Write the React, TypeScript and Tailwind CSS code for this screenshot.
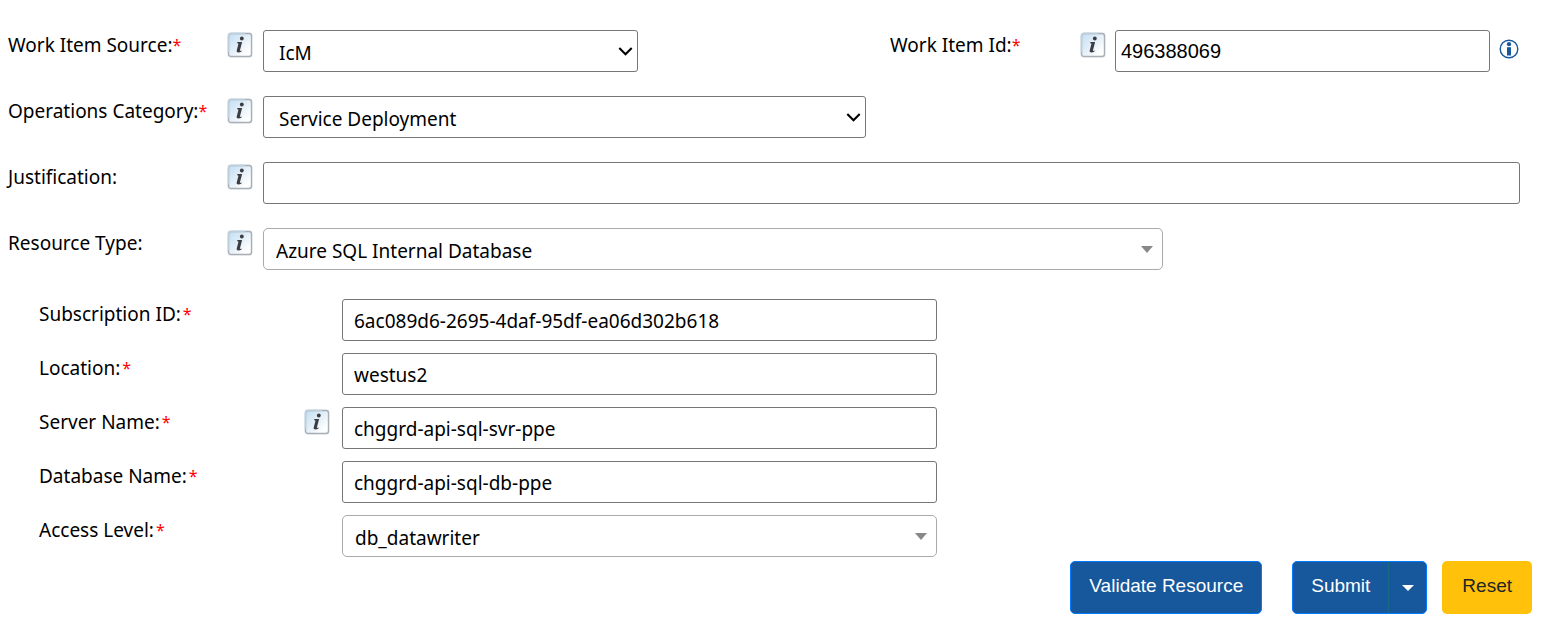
import React, { useId } from "react";

const LABEL_FONT = "font-['Segoe_UI','Noto_Sans','Open_Sans',sans-serif]";
const BUTTON_FONT = "font-['Liberation_Sans',Arial,sans-serif]";

function Star() {
  return <span className="align-top text-[16px] text-[#ff0000]">*</span>;
}

function HelpBadge() {
  const id = useId();
  return (
    <svg className="mt-[2px] size-[26px] shrink-0" viewBox="0 0 26 26" aria-hidden="true">
      <defs>
        <linearGradient id={id} x1="0" y1="0" x2="1" y2="1">
          <stop offset="0" stopColor="#c3def2" />
          <stop offset="0.45" stopColor="#e2eef8" />
          <stop offset="0.8" stopColor="#fdfefe" />
        </linearGradient>
      </defs>
      <rect x="0" y="0" width="26" height="26" rx="3" fill="#f3f8fc" />
      <rect x="1.5" y="1.5" width="23" height="23" rx="2.5" fill={`url(#${id})`} stroke="#a9afb5" strokeWidth="1.4" />
      <path d="M1.5 20V4a2.5 2.5 0 0 1 2.5-2.5h14" fill="none" stroke="#bccfdc" strokeWidth="1.4" />
      <circle cx="14.8" cy="6.5" r="1.9" fill="#3a3e44" />
      <path d="M10.4 10.1h4.7l-2.2 8.3c-.2.7.3.8 1.8.1l-.4 1.2c-2 1-5.2 1.4-4.6-1.2l1.7-6.4c.2-.7-.4-.8-1.3-.8z" fill="#3a3e44" />
    </svg>
  );
}

function InfoCircle() {
  return (
    <svg className="size-5" viewBox="0 0 20 20" aria-hidden="true">
      <circle cx="10" cy="10" r="8.8" fill="none" stroke="#17579b" strokeWidth="1.4" />
      <circle cx="10" cy="5.2" r="2.1" fill="#17579b" />
      <path d="M8 8.2h4v8.3H8z" fill="#17579b" />
    </svg>
  );
}

type SelectProps = { id: string; value: string; kind: "native" | "combo" };

function SelectBox({ id, value, kind }: SelectProps) {
  const native = kind === "native";
  return (
    <div className="relative w-full">
      <select
        id={id}
        defaultValue={value}
        className={
          native
            ? "block h-[42px] w-full appearance-none rounded-[3px] border border-[#767676] bg-white pt-1 pr-8 pl-[15px] text-[19px] text-black"
            : "block h-[42px] w-full appearance-none rounded-[5px] border border-[#aaaaaa] bg-white pt-1 pr-8 pl-3 text-[19px] text-black"
        }
      >
        <option>{value}</option>
      </select>
      {native ? (
        <svg className="pointer-events-none absolute top-[17px] right-[5px] h-[9px] w-[15px]" viewBox="0 0 15 9" aria-hidden="true">
          <path d="M1.3 1.1 7.5 7.2 13.7 1.1" fill="none" stroke="#000" strokeWidth="2.1" />
        </svg>
      ) : (
        <svg className="pointer-events-none absolute top-[18px] right-[10px] h-[7px] w-3" viewBox="0 0 12 7" aria-hidden="true">
          <path d="M0 0h12L6 7z" fill="#888" />
        </svg>
      )}
    </div>
  );
}

type RowProps = { id: string; label: string; required?: boolean; children: React.ReactNode };

function MainRow({ id, label, required, children }: RowProps) {
  return (
    <div className="flex items-start">
      <label htmlFor={id} className="w-[219px] shrink-0 leading-[30px] whitespace-nowrap">
        {label}
        {required && <Star />}
      </label>
      <div className="w-9 shrink-0">
        <HelpBadge />
      </div>
      <div className="min-w-0 flex-1">{children}</div>
    </div>
  );
}

function ResourceRow({ id, label, help, children }: { id: string; label: string; help?: boolean; children: React.ReactNode }) {
  return (
    <div className="flex items-start">
      <label htmlFor={id} className="flex w-[265px] shrink-0 gap-[2px] leading-[30px] whitespace-nowrap">
        <span>{label}</span>
        <Star />
      </label>
      <div className="w-[38px] shrink-0">{help && <HelpBadge />}</div>
      <div className="min-w-0 flex-1">
        <div className="w-[50.5%]">{children}</div>
      </div>
    </div>
  );
}

function ResourceInput({ id, value }: { id: string; value: string }) {
  return (
    <input
      id={id}
      type="text"
      defaultValue={value}
      className="block h-[42px] w-full rounded-[3px] border border-[#767676] bg-white px-[11px] pt-[2px] text-[19px] text-black"
    />
  );
}

export default function App() {
  return (
    <form className={`bg-white pt-[30px] pb-5 text-[19px] text-black ${LABEL_FONT}`} onSubmit={(e) => e.preventDefault()}>
      <div className="flex flex-col gap-6 pr-8 pl-2">
        <div className="flex items-start">
          <div className="min-w-0 flex-1">
            <MainRow id="source" label="Work Item Source:" required>
              <SelectBox id="source" value="IcM" kind="native" />
            </MainRow>
          </div>
          <div className="box-content flex min-w-0 flex-1 items-start pl-[252px]">
            <label htmlFor="item-id" className="w-[190px] shrink-0 leading-[30px] whitespace-nowrap">
              Work Item Id:
              <Star />
            </label>
            <div className="w-[35px] shrink-0">
              <HelpBadge />
            </div>
            <input
              id="item-id"
              type="text"
              defaultValue="496388069"
              className="h-[42px] min-w-0 flex-1 rounded-[3px] border border-[#767676] bg-white px-[5px] font-['Liberation_Sans',Arial,sans-serif] text-[20px] text-black"
            />
            <button type="button" aria-label="Work item details" className="mt-[9px] ml-[9px] w-[21px] shrink-0">
              <InfoCircle />
            </button>
          </div>
        </div>

        <MainRow id="category" label="Operations Category:" required>
          <div className="w-[48%]">
            <SelectBox id="category" value="Service Deployment" kind="native" />
          </div>
        </MainRow>

        <MainRow id="justification" label="Justification:">
          <input
            id="justification"
            type="text"
            className="block h-[42px] w-full rounded-[3px] border border-[#767676] bg-white px-[5px]"
          />
        </MainRow>

        <MainRow id="resource-type" label="Resource Type:">
          <div className="w-[71.6%]">
            <SelectBox id="resource-type" value="Azure SQL Internal Database" kind="combo" />
          </div>
        </MainRow>
      </div>

      <div className="mt-[29px] flex flex-col gap-3 pr-8 pl-[39px]">
        <ResourceRow id="subscription" label="Subscription ID:">
          <ResourceInput id="subscription" value="6ac089d6-2695-4daf-95df-ea06d302b618" />
        </ResourceRow>
        <ResourceRow id="location" label="Location:">
          <ResourceInput id="location" value="westus2" />
        </ResourceRow>
        <ResourceRow id="server" label="Server Name:" help>
          <ResourceInput id="server" value="chggrd-api-sql-svr-ppe" />
        </ResourceRow>
        <ResourceRow id="database" label="Database Name:">
          <ResourceInput id="database" value="chggrd-api-sql-db-ppe" />
        </ResourceRow>
        <ResourceRow id="access" label="Access Level:">
          <SelectBox id="access" value="db_datawriter" kind="combo" />
        </ResourceRow>
      </div>

      <div className={`mt-1 flex justify-end pr-5 text-[19px] ${BUTTON_FONT}`}>
        <button type="button" className="h-[53px] rounded-[5px] border border-[#007bff] bg-[#17579b] px-[18px] pb-[2px] text-white">
          Validate Resource
        </button>
        <div className="ml-[30px] flex h-[53px] overflow-hidden rounded-[5px] border border-[#007bff] bg-[#17579b] text-white">
          <button type="submit" className="border-r border-[#176b80] px-[18px] pb-[2px]">
            Submit
          </button>
          <button type="button" aria-label="More submit options" className="flex w-[37px] items-center justify-center">
            <svg className="h-[6px] w-3" viewBox="0 0 12 6" aria-hidden="true">
              <path d="M0 0h12L6 6z" fill="#fff" />
            </svg>
          </button>
        </div>
        <button type="reset" className="ml-[15px] h-[53px] rounded-[5px] bg-[#ffc10a] px-5 pb-[2px] text-[#212529]">
          Reset
        </button>
      </div>
    </form>
  );
}
